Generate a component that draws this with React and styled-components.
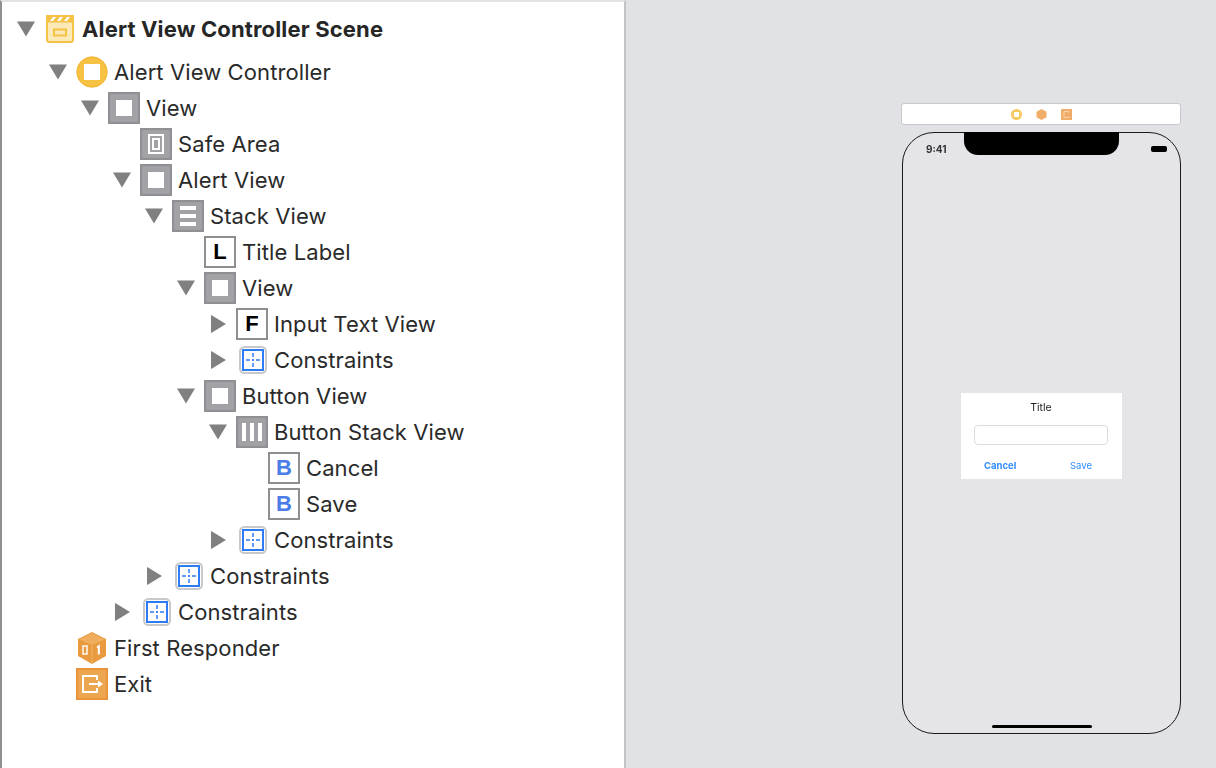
import React from "react";
import styled, { createGlobalStyle } from "styled-components";

const Global = createGlobalStyle`
  html, body { margin: 0; padding: 0; background: #e1e2e6; }
  * { box-sizing: border-box; }
`;

const Page = styled.div`
  width: 1216px;
  height: 768px;
  display: flex;
  overflow: hidden;
  font-family: Inter, "Liberation Sans", sans-serif;
`;

const Outline = styled.div`
  width: 626px;
  flex: none;
  background: #fff;
  border-top: 2px solid #e3e3e3;
  border-left: 2px solid #8f8f94;
  border-right: 2px solid #c4c4c6;
  padding-top: 9px;
`;

const Row = styled.div`
  display: flex;
  align-items: center;
  height: 36px;
  padding-left: ${(p) => 14 + p.$level * 32}px;
  margin-bottom: ${(p) => (p.$scene ? 7 : 0)}px;
`;

const ArrowSlot = styled.div`
  width: 20px;
  height: 36px;
  flex: none;
  display: flex;
  align-items: center;
  justify-content: center;
  margin-right: 8px;
`;

const IconSlot = styled.div`
  width: 32px;
  height: 32px;
  flex: none;
  display: flex;
  align-items: center;
  justify-content: center;
`;

const Label = styled.span`
  margin-left: 6px;
  padding-top: 1px;
  font-size: 22px;
  font-weight: ${(p) => (p.$bold ? 700 : 400)};
  color: ${(p) => (p.$bold ? "#262626" : "#2a2a2a")};
  letter-spacing: ${(p) => (p.$bold ? "0.15px" : "0.1px")};
  white-space: nowrap;
  line-height: 35px;
`;

const GrayBox = styled.div`
  width: 32px;
  height: 32px;
  background: #a1a1a6;
  border: 2px solid #8f8f94;
  display: flex;
  align-items: center;
  justify-content: center;
  flex: none;
`;

const WhiteSquare = styled.div`
  width: 16px;
  height: 16px;
  background: #fff;
`;

const SafeOuter = styled.div`
  width: 16px;
  height: 20px;
  border: 2px solid #fff;
  display: flex;
  align-items: center;
  justify-content: center;
`;

const SafeInner = styled.div`
  width: 8px;
  height: 12px;
  border: 2px solid #fff;
`;

const StackBars = styled.div`
  display: flex;
  flex-direction: ${(p) => (p.$horizontal ? "row" : "column")};
  height: ${(p) => (p.$horizontal ? "18px" : "20px")};
  width: ${(p) => (p.$horizontal ? "20px" : "16px")};
  gap: 4px;
`;

const Bar = styled.div`
  background: #fff;
  flex: 1;
`;

const LetterBox = styled.div`
  width: 32px;
  height: 32px;
  border: 2px solid #8f8f94;
  background: #fff;
  display: flex;
  align-items: center;
  justify-content: center;
  font-family: "Liberation Sans", Inter, sans-serif;
  font-weight: 700;
  font-size: 22px;
  line-height: 1;
  color: ${(p) => (p.$blue ? "#4a7de8" : "#000")};
`;

const Canvas = styled.div`
  flex: 1;
  padding: 103px 0 0 275px;
  display: flex;
  flex-direction: column;
`;

const SceneBar = styled.div`
  width: 280px;
  height: 22px;
  background: #fff;
  border: 1px solid #c8c8ca;
  border-radius: 3px;
  display: flex;
  align-items: center;
  justify-content: center;
  gap: 14px;
  margin-bottom: 7px;
  filter: blur(0.3px);
`;

const Phone = styled.div`
  position: relative;
  width: 279px;
  height: 602px;
  margin-left: 1px;
  background: #e4e4e9;
  border: 1px solid #1a1a1a;
  border-radius: 32px;
  display: flex;
  flex-direction: column;
  align-items: center;
`;

const Notch = styled.div`
  position: absolute;
  top: -1px;
  left: 61px;
  width: 155px;
  height: 23px;
  background: #000;
  border-radius: 0 0 14px 14px;
  filter: blur(0.3px);
`;

const StatusBar = styled.div`
  width: 100%;
  height: 260px;
  padding: 10px 13px 0 23px;
  display: flex;
  justify-content: space-between;
  align-items: flex-start;
`;

const Clock = styled.span`
  font-family: Inter, "Liberation Sans", sans-serif;
  font-size: 10px;
  font-weight: 700;
  color: #333;
  line-height: 12px;
  filter: blur(0.3px);
`;

const Battery = styled.div`
  width: 16px;
  height: 6px;
  margin-top: 3px;
  background: #000;
  border-radius: 2px;
  filter: blur(0.3px);
`;

const Alert = styled.div`
  width: 161px;
  height: 86px;
  background: #fff;
  padding: 8px 14px 0 13px;
  display: flex;
  flex-direction: column;
  align-items: stretch;
  filter: blur(0.25px);
`;

const AlertTitle = styled.div`
  font-size: 10.5px;
  color: #222;
  text-align: center;
  line-height: 14px;
  height: 24px;
`;

const AlertInput = styled.div`
  height: 20px;
  border: 1px solid #dcdcdc;
  border-radius: 4px;
  background: #fff;
`;

const AlertButtons = styled.div`
  display: flex;
  justify-content: space-between;
  margin-top: 15px;
  padding: 0 16px 0 10px;
`;

const AlertButton = styled.span`
  font-size: 9.5px;
  line-height: 12px;
  font-weight: ${(p) => (p.$bold ? 700 : 400)};
  color: #2f8cff;
`;

const HomeBar = styled.div`
  position: absolute;
  bottom: 5px;
  left: 89px;
  width: 100px;
  height: 3px;
  background: #000;
  border-radius: 2px;
`;

const ConstraintSvg = styled.svg`
  margin-left: 2px;
  flex: none;
`;

const Arrow = ({ dir }) => {
  if (dir === "down")
    return (
      <svg width="18" height="16" viewBox="0 0 18 16">
        <path d="M0 0.5H18L9 15.5Z" fill="#808080" />
      </svg>
    );
  if (dir === "right")
    return (
      <svg width="15" height="18" viewBox="0 0 15 18">
        <path d="M0 0H0.2L15 9L0.2 18H0Z" fill="#808080" />
      </svg>
    );
  return null;
};

const SceneIcon = () => (
  <svg width="28" height="28" viewBox="0 0 28 28">
    <rect x="1" y="1" width="26" height="26" rx="2.5" fill="#fbeab8" stroke="#f5c146" strokeWidth="2" />
    <rect x="0" y="0" width="28" height="7.5" fill="#f5c146" />
    <path d="M4 6L7 2H10L7 6ZM11 6L14 2H17L14 6ZM18 6L21 2H24L21 6Z" fill="#fff" />
    <rect x="8" y="14.5" width="12" height="6" fill="none" stroke="#f5c146" strokeWidth="2" />
  </svg>
);

const ControllerIcon = () => (
  <svg width="32" height="32" viewBox="0 0 32 32">
    <circle cx="16" cy="16" r="15.5" fill="#f6c244" />
    <circle cx="16" cy="16" r="15" fill="none" stroke="#f2b735" strokeWidth="1" />
    <rect x="8" y="8" width="16" height="16" fill="#fff" />
  </svg>
);

const ConstraintIcon = () => (
  <ConstraintSvg width="28" height="28" viewBox="0 0 28 28">
    <rect x="1" y="1" width="26" height="26" rx="4.5" fill="#fff" stroke="#c8c8ca" strokeWidth="2" />
    <rect x="4" y="4" width="20" height="20" fill="#fff" stroke="#2f7bf5" strokeWidth="2" />
    <path d="M14 7V11M14 13V15M14 17V21M7 14H11M13 14H15M17 14H21" stroke="#2f7bf5" strokeWidth="1.5" fill="none" />
  </ConstraintSvg>
);

const CubeIcon = () => (
  <svg width="28" height="32" viewBox="0 0 28 32">
    <path d="M14 0L28 7V24L14 32L0 24V7Z" fill="#ea9a3e" />
    <path d="M14 1L27 7.5L14 13L1 7.5Z" fill="#f0ad5e" />
    <path d="M14 13.5V31" stroke="#f3bc7a" strokeWidth="0.8" />
    <rect x="5" y="14" width="4" height="8" fill="none" stroke="#fff" strokeWidth="1.4" />
    <path d="M19 15.5L20.8 14.2V22.5" fill="none" stroke="#fff" strokeWidth="2" />
  </svg>
);

const ExitIcon = () => (
  <svg width="32" height="32" viewBox="0 0 32 32">
    <rect x="1" y="1" width="30" height="30" fill="#eda650" stroke="#e8943a" strokeWidth="2" />
    <path d="M21 12V8H7V24H21V20" fill="none" stroke="#fff" strokeWidth="2" />
    <path d="M13 16H24" stroke="#fff" strokeWidth="2" />
    <path d="M22 12.5L27 16L22 19.5Z" fill="#fff" />
  </svg>
);

const MiniCircle = () => (
  <svg width="11" height="11" viewBox="0 0 11 11">
    <circle cx="5.5" cy="5.5" r="5.5" fill="#f8c95c" />
    <rect x="3" y="3" width="5" height="5" fill="#fff" />
  </svg>
);
const MiniCube = () => (
  <svg width="11" height="11" viewBox="0 0 11 11">
    <path d="M5.5 0L10.5 2.7V8.3L5.5 11L0.5 8.3V2.7Z" fill="#f0ad68" />
  </svg>
);
const MiniExit = () => (
  <svg width="11" height="11" viewBox="0 0 11 11">
    <rect width="11" height="11" fill="#f0ad68" />
    <path d="M7.5 4V2.5H3V8.5H7.5V7" fill="none" stroke="#fbe3c8" strokeWidth="0.7" />
  </svg>
);

const ViewIcon = () => (
  <GrayBox>
    <WhiteSquare />
  </GrayBox>
);

const icons = {
  scene: <SceneIcon />,
  controller: <ControllerIcon />,
  view: <ViewIcon />,
  safe: (
    <GrayBox>
      <SafeOuter>
        <SafeInner />
      </SafeOuter>
    </GrayBox>
  ),
  vstack: (
    <GrayBox>
      <StackBars>
        <Bar />
        <Bar />
        <Bar />
      </StackBars>
    </GrayBox>
  ),
  hstack: (
    <GrayBox>
      <StackBars $horizontal>
        <Bar />
        <Bar />
        <Bar />
      </StackBars>
    </GrayBox>
  ),
  L: <LetterBox>L</LetterBox>,
  F: <LetterBox>F</LetterBox>,
  B: <LetterBox $blue>B</LetterBox>,
  constraint: <ConstraintIcon />,
  cube: <CubeIcon />,
  exit: <ExitIcon />,
};

const tree = [
  { level: 0, arrow: "down", icon: "scene", text: "Alert View Controller Scene", bold: true, scene: true },
  { level: 1, arrow: "down", icon: "controller", text: "Alert View Controller" },
  { level: 2, arrow: "down", icon: "view", text: "View" },
  { level: 3, icon: "safe", text: "Safe Area" },
  { level: 3, arrow: "down", icon: "view", text: "Alert View" },
  { level: 4, arrow: "down", icon: "vstack", text: "Stack View" },
  { level: 5, icon: "L", text: "Title Label" },
  { level: 5, arrow: "down", icon: "view", text: "View" },
  { level: 6, arrow: "right", icon: "F", text: "Input Text View" },
  { level: 6, arrow: "right", icon: "constraint", text: "Constraints" },
  { level: 5, arrow: "down", icon: "view", text: "Button View" },
  { level: 6, arrow: "down", icon: "hstack", text: "Button Stack View" },
  { level: 7, icon: "B", text: "Cancel" },
  { level: 7, icon: "B", text: "Save" },
  { level: 6, arrow: "right", icon: "constraint", text: "Constraints" },
  { level: 4, arrow: "right", icon: "constraint", text: "Constraints" },
  { level: 3, arrow: "right", icon: "constraint", text: "Constraints" },
  { level: 1, icon: "cube", text: "First Responder" },
  { level: 1, icon: "exit", text: "Exit" },
];

export default function App() {
  return (
    <Page>
      <Global />
      <Outline>
        {tree.map((n, i) => (
          <Row key={i} $level={n.level} $scene={n.scene}>
            <ArrowSlot>
              <Arrow dir={n.arrow} />
            </ArrowSlot>
            <IconSlot>{icons[n.icon]}</IconSlot>
            <Label $bold={n.bold}>{n.text}</Label>
          </Row>
        ))}
      </Outline>
      <Canvas>
        <SceneBar>
          <MiniCircle />
          <MiniCube />
          <MiniExit />
        </SceneBar>
        <Phone>
          <Notch />
          <StatusBar>
            <Clock>9:41</Clock>
            <Battery />
          </StatusBar>
          <Alert>
            <AlertTitle>Title</AlertTitle>
            <AlertInput />
            <AlertButtons>
              <AlertButton $bold>Cancel</AlertButton>
              <AlertButton>Save</AlertButton>
            </AlertButtons>
          </Alert>
          <HomeBar />
        </Phone>
      </Canvas>
    </Page>
  );
}
